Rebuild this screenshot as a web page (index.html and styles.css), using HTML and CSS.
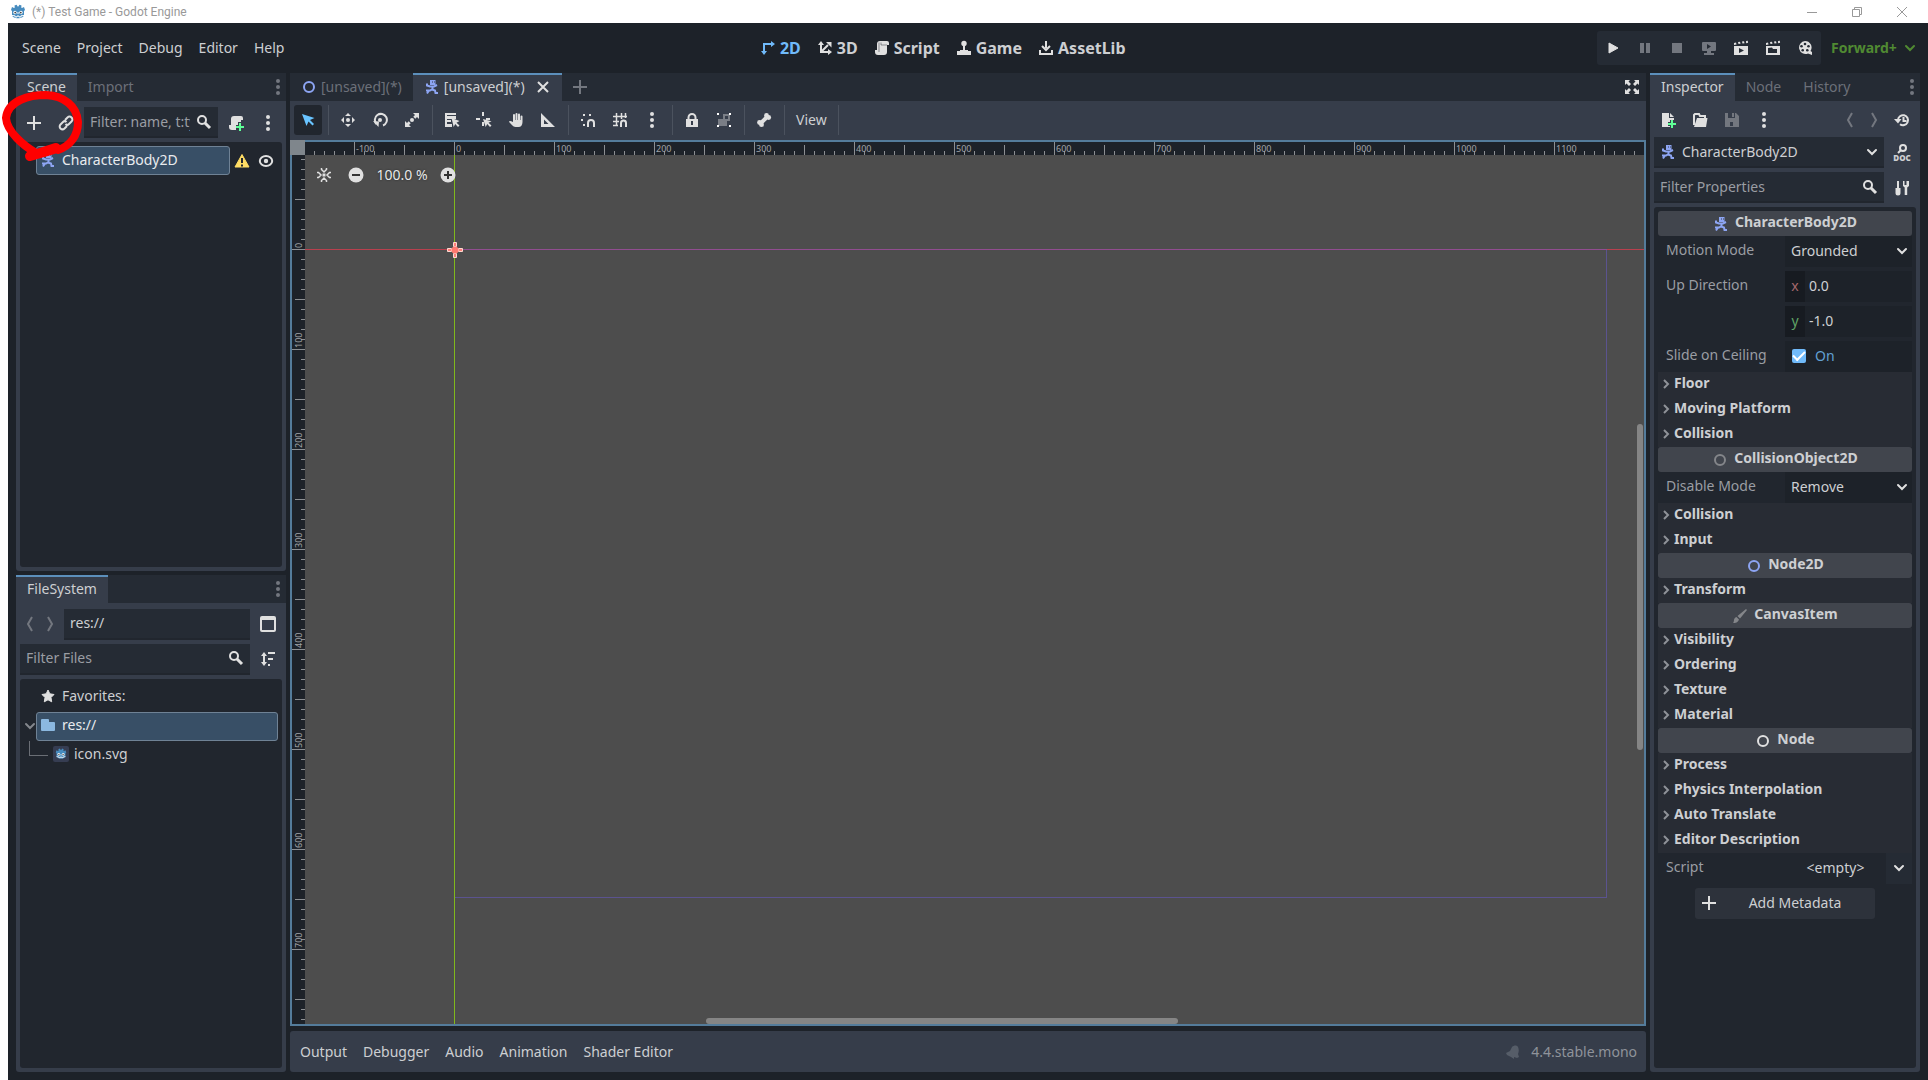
FILE: index.html
```html
<!DOCTYPE html>
<html lang="en">
<head>
    <meta charset="UTF-8">
    <meta name="viewport" content="width=device-width, initial-scale=1.0">
    <title>(*) Test Game - Godot Engine</title>
    <link rel="stylesheet" href="styles.css">
</head>
<body>
    <svg class="sprite" aria-hidden="true">
        <symbol id="i-godot" viewBox="0 0 16 16"><path fill="#478cbf" d="M1 6l1-3 2 1 .8-.5L4.500 1.600 6.600 .8l1 1.700h.8l1-1.700 2.100.8-.3 1.900.8.5 2-1 1 3-1 1v4c0 2-3 3.200-6 3.200S2 13 2 11V7z"/><circle cx="5" cy="8.500" r="1.700" fill="#fff"/><circle cx="11" cy="8.500" r="1.700" fill="#fff"/><circle cx="5.200" cy="8.600" r=".9" fill="#414042"/><circle cx="10.800" cy="8.600" r=".9" fill="#414042"/><path stroke="#fff" d="M8 8v2M2 11.500l3 .3v1l2 .2v-1h2v1l2-.2v-1l3-.3" fill="none"/></symbol>
        <symbol id="i-body" viewBox="0 0 16 16"><path fill="#8da5f3" d="M6 1h5.500v5H6z"/><path d="M3 4.500v2l3 1h4l3-1.500M8.500 7v3L6 11.500H2M8 10.500l3 1 .5 2.500H14M5 11.500L3 14.500" fill="none" stroke="#8da5f3" stroke-width="2"/><path stroke="#363d4a" d="M8 3h1M10 3h1"/></symbol>
        <symbol id="i-ring" viewBox="0 0 16 16"><circle cx="8" cy="8" r="5" fill="none" stroke="currentColor" stroke-width="2"/></symbol>
        <symbol id="i-brush" viewBox="0 0 16 16"><path fill="currentColor" d="M14 1l1 1-7 8.500L5.500 8zM4.500 9l2.500 2.500c-1 3-3.500 3.500-6 3.500 1.500-1 0-5 3.500-6z"/></symbol>
        <symbol id="i-add" viewBox="0 0 16 16"><path fill="currentColor" d="M7 1v6H1v2h6v6h2V9h6V7H9V1z"/></symbol>
        <symbol id="i-link" viewBox="0 0 16 16"><path d="M7 5l2.500-2.500a2.500 2.500 0 0 1 4 4L11 9a2.500 2.500 0 0 1-3.500 0M9 11l-2.500 2.500a2.500 2.500 0 0 1-4-4L5 7a2.500 2.500 0 0 1 3.500 0" fill="none" stroke="currentColor" stroke-width="2"/></symbol>
        <symbol id="i-search" viewBox="0 0 16 16"><circle cx="6" cy="6" r="4" fill="none" stroke="currentColor" stroke-width="2"/><path d="M9 9l5 5" stroke="currentColor" stroke-width="3"/></symbol>
        <symbol id="i-script" viewBox="0 0 16 16"><path fill="currentColor" d="M6 1a3 3 0 0 0-3 3v6H1v2a3 3 0 0 0 3 3h6a3 3 0 0 0 3-3V5h2V3a2 2 0 0 0-2-2z"/><path stroke="#1d2229" stroke-opacity=".45" fill="none" d="M5 2.500V12M7 5h6M7 2.500V5"/></symbol>
        <symbol id="i-script-add" viewBox="0 0 16 16"><path fill="currentColor" d="M6 1a3 3 0 0 0-3 3v6H1v2a3 3 0 0 0 3 3h4v-5h2V7h3V5h2V3a2 2 0 0 0-2-2z"/><path fill="#5fff97" d="M11 8v3H8v2h3v3h2v-3h3v-2h-3V8z"/></symbol>
        <symbol id="i-dots" viewBox="0 0 16 16"><g fill="currentColor"><circle cx="8" cy="2" r="2"/><circle cx="8" cy="8" r="2"/><circle cx="8" cy="14" r="2"/></g></symbol>
        <symbol id="i-warning" viewBox="0 0 16 16"><path fill="#ffdd65" d="M8 1.500L15 14H1z" stroke="#ffdd65" stroke-linejoin="round"/><path stroke="#21262e" stroke-width="2" d="M8 5v5M8 11.500v2"/></symbol>
        <symbol id="i-eye" viewBox="0 0 16 16"><ellipse cx="8" cy="8" rx="6.200" ry="5" fill="none" stroke="currentColor" stroke-width="2"/><circle cx="8" cy="8" r="2.200" fill="currentColor"/></symbol>
        <symbol id="i-back" viewBox="0 0 16 16"><path d="M10 1L6 8l4 7" fill="none" stroke="currentColor" stroke-width="2"/></symbol>
        <symbol id="i-fwd" viewBox="0 0 16 16"><path d="M6 1l4 7-4 7" fill="none" stroke="currentColor" stroke-width="2"/></symbol>
        <symbol id="i-panel" viewBox="0 0 16 16"><path fill="currentColor" fill-rule="evenodd" d="M2 0h12a2 2 0 0 1 2 2v12a2 2 0 0 1-2 2H2a2 2 0 0 1-2-2V2a2 2 0 0 1 2-2zm0 4v10h12V4z"/></symbol>
        <symbol id="i-sort" viewBox="0 0 16 16"><path fill="currentColor" d="M4 1l3 4H5v6h2l-3 4-3-4h2V5H1zM8 1h7v2H8zM8 7h5v2H8zM8 13h2v2H8z"/></symbol>
        <symbol id="i-star" viewBox="0 0 16 16"><path fill="currentColor" stroke="currentColor" stroke-linejoin="round" d="M8 2l1.800 3.800 4.200.7-3 3 .7 4.300L8 11.800l-3.700 2 .7-4.300-3-3 4.200-.7z"/></symbol>
        <symbol id="i-folder" viewBox="0 0 16 16"><path fill="#8bb8e0" d="M2 2a1 1 0 0 0-1 1v10a1 1 0 0 0 1 1h12a1 1 0 0 0 1-1V6a1 1 0 0 0-1-1H9V3a1 1 0 0 0-1-1z"/></symbol>
        <symbol id="i-down" viewBox="0 0 16 16"><path d="M4 6l4 4 4-4" fill="none" stroke="currentColor" stroke-width="2" stroke-linecap="round"/></symbol>
        <symbol id="i-right" viewBox="0 0 16 16"><path d="M6 4l4 4-4 4" fill="none" stroke="currentColor" stroke-width="2"/></symbol>
        <symbol id="i-close" viewBox="0 0 16 16"><path d="M3 3l10 10M13 3L3 13" stroke="currentColor" stroke-width="2"/></symbol>
        <symbol id="i-select" viewBox="0 0 16 16"><path fill="#69c4ff" d="M2 2l4.500 12 2-4.500 4 4 1.500-1.500-4-4L14.500 6z"/></symbol>
        <symbol id="i-move" viewBox="0 0 16 16"><path fill="currentColor" d="M8 1l3 3H5zM8 15l3-3H5zM1 8l3-3v6zM15 8l-3-3v6z"/><circle cx="8" cy="8" r="2" fill="currentColor"/></symbol>
        <symbol id="i-rotate" viewBox="0 0 16 16"><path d="M4.500 12A6 6 0 1 1 11 13.500" fill="none" stroke="currentColor" stroke-width="2"/><path fill="currentColor" d="M1 9l6 .5-.5 5.500z"/><circle cx="8" cy="8" r="2" fill="currentColor"/></symbol>
        <symbol id="i-scale" viewBox="0 0 16 16"><path fill="currentColor" d="M9 1h6v6l-2-2-1.700 1.700-2-2L11 3zM7 15H1V9l2 2 1.700-1.700 2 2L5 13z"/><circle cx="8" cy="8" r="2" fill="currentColor"/></symbol>
        <symbol id="i-list" viewBox="0 0 16 16"><path fill="currentColor" d="M1 1h11v2H3v1h9v3H3v1h4v2H3v2h5v3H1z"/><path fill="currentColor" d="M7.500 6l2.200 9 1.500-3 2.800 3 1.500-1.500-3-2.800L15.500 9z"/></symbol>
        <symbol id="i-pivot" viewBox="0 0 16 16"><path fill="currentColor" d="M6 0h2v4H6zM0 6h4v2H0zM6 10h2v4H6zM10 6h4v2h-4z"/><path fill="currentColor" d="M7 7l2.700 8 1.500-3 2.800 3 1.500-1.500-3-2.800 3-1.500z"/></symbol>
        <symbol id="i-hand" viewBox="0 0 16 16"><path fill="currentColor" d="M5 3a1 1 0 0 1 2 0v5h.5V2a1 1 0 0 1 2 0v6h.5V2.500a1 1 0 0 1 2 0V8h.5V4.500a1 1 0 0 1 2 0V10c0 3-1.500 5-4 5H7.500C5 15 3.500 12 1 10c0-1.500 1.500-1.500 4 0z"/></symbol>
        <symbol id="i-ruler" viewBox="0 0 16 16"><path fill="currentColor" fill-rule="evenodd" d="M1 1l14 14H1zm3 6.500V12h4.500z"/></symbol>
        <symbol id="i-snap" viewBox="0 0 16 16"><path fill="currentColor" d="M3 2h2v2H3zM9 2h2v2H9zM1 7h2v2H1zM3 12h2v2H3z"/><path d="M8 15v-4a3 3 0 0 1 6 0v4" fill="none" stroke="currentColor" stroke-width="2"/></symbol>
        <symbol id="i-grid" viewBox="0 0 16 16"><path d="M4.500 1v13M9.500 1v6M1 4.500h14M1 9.500h6M1 13.500h5M13.500 1v5" stroke="currentColor" stroke-width="1.500"/><path d="M9 15v-4a2.500 2.500 0 0 1 5 0v4" fill="none" stroke="currentColor" stroke-width="2"/></symbol>
        <symbol id="i-lock" viewBox="0 0 16 16"><path d="M4.500 8V5.500a3.500 3.500 0 0 1 7 0V8" fill="none" stroke="currentColor" stroke-width="2"/><path fill="currentColor" fill-rule="evenodd" d="M2 7h12v8H2zm5 2v4h2V9z"/></symbol>
        <symbol id="i-group" viewBox="0 0 16 16"><path fill="currentColor" fill-opacity=".4" fill-rule="evenodd" d="M7 2h7v7h-3v5H2V7h5zm2 2v3h3V4z"/><path fill="#fff" d="M1 1h2v2H1zM13 1h2v2h-2zM1 13h2v2H1zM13 13h2v2h-2z"/></symbol>
        <symbol id="i-bone" viewBox="0 0 16 16"><path d="M4.500 11.500l7-7" stroke="currentColor" stroke-width="4"/><g fill="currentColor"><circle cx="3.500" cy="10.500" r="2.400"/><circle cx="5.500" cy="12.700" r="2.400"/><circle cx="10.500" cy="3.500" r="2.400"/><circle cx="12.700" cy="5.500" r="2.400"/></g></symbol>
        <symbol id="i-2d" viewBox="0 0 16 16"><path d="M4 12V4h7" fill="none" stroke="currentColor" stroke-width="2"/><path fill="currentColor" d="M11 1l4 3-4 3zM1 11h6l-3 4z"/></symbol>
        <symbol id="i-3d" viewBox="0 0 16 16"><path d="M4 4v8h7M4 12l7-7" fill="none" stroke="currentColor" stroke-width="2"/><path fill="currentColor" d="M1 5h6L4 1zM11 9l4 3-4 3zM9 2h5.500v5.500z"/></symbol>
        <symbol id="i-game" viewBox="0 0 16 16"><circle cx="8" cy="3.500" r="2.700" fill="currentColor"/><path fill="currentColor" d="M7 5h2v5h3v1h3v4H1v-4h3v-1h3z"/></symbol>
        <symbol id="i-asset" viewBox="0 0 16 16"><path d="M2 10v4h12v-4M8 1v7" fill="none" stroke="currentColor" stroke-width="2"/><path d="M4 6l4 4 4-4" fill="none" stroke="currentColor" stroke-width="2"/></symbol>
        <symbol id="i-play" viewBox="0 0 16 16"><path fill="currentColor" d="M4 3v10l9-5z" stroke="currentColor" stroke-linejoin="round"/></symbol>
        <symbol id="i-pause" viewBox="0 0 16 16"><path fill="currentColor" d="M3 3h4v10H3zM9 3h4v10H9z"/></symbol>
        <symbol id="i-stop" viewBox="0 0 16 16"><path fill="currentColor" d="M3 3h10v10H3z"/></symbol>
        <symbol id="i-remote" viewBox="0 0 16 16"><path fill="currentColor" fill-rule="evenodd" d="M2 2h12a1 1 0 0 1 1 1v7a1 1 0 0 1-1 1h-4v2h3v2H3v-2h3v-2H2a1 1 0 0 1-1-1V3a1 1 0 0 1 1-1zm4 2v5l4-2.500z"/></symbol>
        <symbol id="i-clip" viewBox="0 0 16 16"><path fill="currentColor" fill-rule="evenodd" d="M1 6h14v9H1zm5 2v5l5-2.500z"/><path fill="currentColor" d="M1 3l2-.5.5 2L1 5zM5 2l2-.3.500 2-2 .4zM9 1.500l2-.3.500 2-2 .4zM13 1l1.800-.2.300 2-2 .4z"/></symbol>
        <symbol id="i-clip-folder" viewBox="0 0 16 16"><path fill="currentColor" fill-rule="evenodd" d="M1 6h14v9H1zm2 2v5h9V9H8L7 7.500z"/><path fill="currentColor" d="M1 3l2-.5.5 2L1 5zM5 2l2-.3.500 2-2 .4zM9 1.500l2-.3.500 2-2 .4zM13 1l1.800-.2.300 2-2 .4z"/></symbol>
        <symbol id="i-reel" viewBox="0 0 16 16"><path fill="currentColor" d="M8 1a6.500 6.500 0 1 0 3 12.500L15 15v-3l-1.500-1A6.500 6.500 0 0 0 8 1z"/><g fill="#252b34"><circle cx="8" cy="4" r="1.300"/><circle cx="4.500" cy="6.300" r="1.300"/><circle cx="11.500" cy="6.300" r="1.300"/><circle cx="5.700" cy="10.300" r="1.300"/><circle cx="10.300" cy="10.300" r="1.300"/></g></symbol>
        <symbol id="i-expand" viewBox="0 0 16 16"><path fill="currentColor" d="M1 1h5L4.500 2.500l2.500 2.500-2 2-2.500-2.500L1 6zM15 1v5l-1.500-1.500L11 7 9 5l2.500-2.500L10 1zM1 15v-5l1.500 1.500L5 9l2 2-2.500 2.500L6 15zM15 15h-5l1.500-1.500L9 11l2-2 2.500 2.500L15 10z"/></symbol>
        <symbol id="i-new" viewBox="0 0 16 16"><path fill="currentColor" d="M2 1h7v5h5v2h-4v2H8v4h2v1H2zM10 1l4 4h-4z"/><path fill="#5fff97" d="M11 8v3H8v2h3v3h2v-3h3v-2h-3V8z"/></symbol>
        <symbol id="i-open" viewBox="0 0 16 16"><path d="M2 13V3l1-1h4l1 2h5v3" fill="none" stroke="currentColor" stroke-width="2"/><path fill="currentColor" d="M5 6h10.500l-1.500 9H2z"/></symbol>
        <symbol id="i-save" viewBox="0 0 16 16"><path fill="currentColor" fill-rule="evenodd" d="M1 1h3v5h7V1h1l3 3v11H1zm5 9v4h3v-4zM8 1h2v4H8z"/></symbol>
        <symbol id="i-history" viewBox="0 0 16 16"><path d="M4 8a5 5 0 1 1 2 4.200M9.500 5v4h3" fill="none" stroke="currentColor" stroke-width="2"/><path fill="currentColor" d="M0 7h7.500L4 11.500z"/></symbol>
        <symbol id="i-tools" viewBox="0 0 16 16"><path fill="currentColor" d="M3 1h2v7h1.500v5a2.500 2.500 0 0 1-5 0V8H3zM9 1h1.500v4h2V1H15v5l-1.800 1.500V15h-2.500V7.500L9 6z"/></symbol>
        <symbol id="i-doc" viewBox="0 0 16 10"><circle cx="9" cy="4" r="3" fill="none" stroke="currentColor" stroke-width="2"/><path d="M7 6L4 9" stroke="currentColor" stroke-width="2"/></symbol>
        <symbol id="i-center" viewBox="0 0 16 16"><path d="M5.500 1v1.500L8 5l2.500-2.500V1M5.500 15v-1.500L8 11l2.500 2.500V15M1 5.500h1.500L5 8l-2.500 2.500H1M15 5.500h-1.500L11 8l2.500 2.500H15" fill="none" stroke="currentColor" stroke-width="1.500"/><path fill="currentColor" d="M6.500 6.500h3v3h-3z"/></symbol>
        <symbol id="i-minus-c" viewBox="0 0 16 16"><circle cx="8" cy="8" r="7.500" fill="#e0e0e0"/><path stroke="#333" stroke-width="2" d="M4 8h8"/></symbol>
        <symbol id="i-plus-c" viewBox="0 0 16 16"><circle cx="8" cy="8" r="7.500" fill="#e0e0e0"/><path stroke="#333" stroke-width="2" d="M4 8h8M8 4v8"/></symbol>
        <symbol id="i-bell" viewBox="0 0 16 16"><path fill="currentColor" d="M7 3c2-2 5-2 6 0s1 5 0 7l1 3-2 1-3-1v2l-3-2-4-2-1-2 4-2z"/></symbol>
        <symbol id="i-min" viewBox="0 0 12 12"><path d="M1 6.500h10" stroke="currentColor"/></symbol>
        <symbol id="i-restore" viewBox="0 0 12 12"><path d="M1.500 3.500h7v7h-7zM3.500 3.500v-2h7v7h-2" fill="none" stroke="currentColor"/></symbol>
        <symbol id="i-x" viewBox="0 0 12 12"><path d="M1 1l10 10M11 1L1 11" stroke="currentColor"/></symbol>
    </svg>

    <header class="titlebar">
        <svg class="icon"><use href="#i-godot"/></svg>
        <span class="title">(*) Test Game - Godot Engine</span>
        <div class="window-buttons">
            <button aria-label="Minimize"><svg><use href="#i-min"/></svg></button>
            <button aria-label="Restore"><svg><use href="#i-restore"/></svg></button>
            <button aria-label="Close"><svg><use href="#i-x"/></svg></button>
        </div>
    </header>

    <div class="editor">
        <div class="menubar">
            <nav class="menus">
                <button>Scene</button>
                <button>Project</button>
                <button>Debug</button>
                <button>Editor</button>
                <button>Help</button>
            </nav>
            <nav class="screens">
                <button class="active"><svg class="icon"><use href="#i-2d"/></svg>2D</button>
                <button><svg class="icon"><use href="#i-3d"/></svg>3D</button>
                <button><svg class="icon"><use href="#i-script"/></svg>Script</button>
                <button><svg class="icon"><use href="#i-game"/></svg>Game</button>
                <button><svg class="icon"><use href="#i-asset"/></svg>AssetLib</button>
            </nav>
            <div class="run">
                <div class="runbar">
                    <button aria-label="Play"><svg class="icon"><use href="#i-play"/></svg></button>
                    <button class="off" aria-label="Pause"><svg class="icon"><use href="#i-pause"/></svg></button>
                    <button class="off" aria-label="Stop"><svg class="icon"><use href="#i-stop"/></svg></button>
                    <button class="off" aria-label="Remote Debug"><svg class="icon"><use href="#i-remote"/></svg></button>
                    <button aria-label="Play Scene"><svg class="icon"><use href="#i-clip"/></svg></button>
                    <button aria-label="Play Custom Scene"><svg class="icon"><use href="#i-clip-folder"/></svg></button>
                    <button aria-label="Movie Maker"><svg class="icon"><use href="#i-reel"/></svg></button>
                </div>
                <div class="dropdown renderer">
                    <select aria-label="Renderer"><option>Forward+</option></select>
                    <svg class="icon"><use href="#i-down"/></svg>
                </div>
            </div>
        </div>

        <div class="workspace">
            <aside class="side">
                <section class="dock scene-dock">
                    <div class="tabs">
                        <button class="tab active">Scene</button>
                        <button class="tab">Import</button>
                        <button class="tab-menu" aria-label="Dock menu"><svg class="icon"><use href="#i-dots"/></svg></button>
                    </div>
                    <div class="dock-body">
                        <div class="row">
                            <button class="tool" aria-label="Add node"><svg class="icon"><use href="#i-add"/></svg></button>
                            <button class="tool" aria-label="Instantiate scene"><svg class="icon"><use href="#i-link"/></svg></button>
                            <div class="field">
                                <input type="text" placeholder="Filter: name, t:type, g:group" aria-label="Filter nodes">
                                <svg class="icon"><use href="#i-search"/></svg>
                            </div>
                            <button class="tool" aria-label="Attach script"><svg class="icon"><use href="#i-script-add"/></svg></button>
                            <button class="tool" aria-label="More"><svg class="icon"><use href="#i-dots"/></svg></button>
                        </div>
                        <ul class="tree">
                            <li>
                                <span class="item selected"><svg class="icon"><use href="#i-body"/></svg>CharacterBody2D</span>
                                <svg class="icon warning"><use href="#i-warning"/></svg>
                                <svg class="icon eye"><use href="#i-eye"/></svg>
                            </li>
                        </ul>
                    </div>
                </section>

                <section class="dock file-dock">
                    <div class="tabs">
                        <button class="tab active">FileSystem</button>
                        <button class="tab-menu" aria-label="Dock menu"><svg class="icon"><use href="#i-dots"/></svg></button>
                    </div>
                    <div class="dock-body">
                        <div class="row">
                            <div class="history">
                                <button class="off" aria-label="Back"><svg class="icon"><use href="#i-back"/></svg></button>
                                <button class="off" aria-label="Forward"><svg class="icon"><use href="#i-fwd"/></svg></button>
                            </div>
                            <div class="field"><input type="text" value="res://" aria-label="Path"></div>
                            <button class="tool" aria-label="Split mode"><svg class="icon"><use href="#i-panel"/></svg></button>
                        </div>
                        <div class="row">
                            <div class="field">
                                <input type="text" placeholder="Filter Files" aria-label="Filter files">
                                <svg class="icon"><use href="#i-search"/></svg>
                            </div>
                            <button class="tool" aria-label="Sort"><svg class="icon"><use href="#i-sort"/></svg></button>
                        </div>
                        <ul class="tree">
                            <li><span class="item"><svg class="icon"><use href="#i-star"/></svg>Favorites:</span></li>
                            <li class="open">
                                <svg class="icon arrow"><use href="#i-down"/></svg>
                                <span class="item selected"><svg class="icon"><use href="#i-folder"/></svg>res://</span>
                            </li>
                            <li class="child"><span class="item"><svg class="icon thumb"><use href="#i-godot"/></svg>icon.svg</span></li>
                        </ul>
                    </div>
                </section>
            </aside>

            <main class="main">
                <div class="tabs">
                    <button class="tab scene-tab"><svg class="icon node2d"><use href="#i-ring"/></svg>[unsaved](*)</button>
                    <button class="tab scene-tab active"><svg class="icon"><use href="#i-body"/></svg>[unsaved](*)<svg class="icon close"><use href="#i-close"/></svg></button>
                    <button class="add-tab" aria-label="New scene"><svg class="icon"><use href="#i-add"/></svg></button>
                    <button class="tab-menu expand" aria-label="Distraction free mode"><svg class="icon"><use href="#i-expand"/></svg></button>
                </div>
                <div class="toolbar">
                    <button class="tool pressed" aria-label="Select"><svg class="icon"><use href="#i-select"/></svg></button>
                    <span class="sep"></span>
                    <button class="tool" aria-label="Move"><svg class="icon"><use href="#i-move"/></svg></button>
                    <button class="tool" aria-label="Rotate"><svg class="icon"><use href="#i-rotate"/></svg></button>
                    <button class="tool" aria-label="Scale"><svg class="icon"><use href="#i-scale"/></svg></button>
                    <span class="sep"></span>
                    <button class="tool" aria-label="List select"><svg class="icon"><use href="#i-list"/></svg></button>
                    <button class="tool" aria-label="Pivot"><svg class="icon"><use href="#i-pivot"/></svg></button>
                    <button class="tool" aria-label="Pan"><svg class="icon"><use href="#i-hand"/></svg></button>
                    <button class="tool" aria-label="Ruler"><svg class="icon"><use href="#i-ruler"/></svg></button>
                    <span class="sep"></span>
                    <button class="tool" aria-label="Smart snap"><svg class="icon"><use href="#i-snap"/></svg></button>
                    <button class="tool" aria-label="Grid snap"><svg class="icon"><use href="#i-grid"/></svg></button>
                    <button class="tool" aria-label="Snap options"><svg class="icon"><use href="#i-dots"/></svg></button>
                    <span class="sep"></span>
                    <button class="tool" aria-label="Lock"><svg class="icon"><use href="#i-lock"/></svg></button>
                    <button class="tool" aria-label="Group"><svg class="icon"><use href="#i-group"/></svg></button>
                    <span class="sep"></span>
                    <button class="tool" aria-label="Skeleton"><svg class="icon"><use href="#i-bone"/></svg></button>
                    <span class="sep"></span>
                    <button class="view">View</button>
                    <span class="sep"></span>
                </div>

                <div class="viewport">
                    <div class="corner"></div>
                    <div class="ruler-x">
                        <span>-100</span><span>0</span><span>100</span><span>200</span><span>300</span><span>400</span><span>500</span><span>600</span><span>700</span><span>800</span><span>900</span><span>1000</span><span>1100</span>
                    </div>
                    <div class="ruler-y">
                        <span>0</span><span>100</span><span>200</span><span>300</span><span>400</span><span>500</span><span>600</span><span>700</span>
                    </div>
                    <div class="canvas">
                        <div class="axis-x"></div>
                        <div class="game-rect"></div>
                        <div class="axis-y"></div>
                        <svg class="origin" viewBox="0 0 16 16"><path fill="#ff8078" stroke="#ffd8d0" d="M6.500.500h3v4h-3zM6.500 11.500h3v4h-3zM.500 6.500h4v3h-4zM11.500 6.500h4v3h-4z"/><circle cx="8" cy="8" r="3.500" fill="#ff7a70"/></svg>
                        <div class="zoom">
                            <button aria-label="Center view"><svg class="icon"><use href="#i-center"/></svg></button>
                            <button aria-label="Zoom out"><svg class="icon"><use href="#i-minus-c"/></svg></button>
                            <span>100.0 %</span>
                            <button aria-label="Zoom in"><svg class="icon"><use href="#i-plus-c"/></svg></button>
                        </div>
                        <div class="scroll-y"></div>
                        <div class="scroll-x"></div>
                    </div>
                </div>

                <footer class="bottom">
                    <button>Output</button>
                    <button>Debugger</button>
                    <button>Audio</button>
                    <button>Animation</button>
                    <button>Shader Editor</button>
                    <span class="version"><svg class="icon"><use href="#i-bell"/></svg>4.4.stable.mono</span>
                </footer>
            </main>

            <aside class="side">
                <section class="dock inspector">
                    <div class="tabs">
                        <button class="tab active">Inspector</button>
                        <button class="tab">Node</button>
                        <button class="tab">History</button>
                        <button class="tab-menu" aria-label="Dock menu"><svg class="icon"><use href="#i-dots"/></svg></button>
                    </div>
                    <div class="dock-body">
                        <div class="row resource-row">
                            <button class="tool" aria-label="New resource"><svg class="icon"><use href="#i-new"/></svg></button>
                            <button class="tool" aria-label="Load resource"><svg class="icon"><use href="#i-open"/></svg></button>
                            <button class="tool off" aria-label="Save resource"><svg class="icon"><use href="#i-save"/></svg></button>
                            <button class="tool" aria-label="More"><svg class="icon"><use href="#i-dots"/></svg></button>
                            <button class="nav off" aria-label="Previous object"><svg class="icon"><use href="#i-back"/></svg></button>
                            <button class="nav off" aria-label="Next object"><svg class="icon"><use href="#i-fwd"/></svg></button>
                            <button class="tool" aria-label="Object history"><svg class="icon"><use href="#i-history"/></svg></button>
                        </div>
                        <div class="row">
                            <div class="field object">
                                <svg class="icon"><use href="#i-body"/></svg>
                                <select aria-label="Edited object"><option>CharacterBody2D</option></select>
                                <svg class="icon"><use href="#i-down"/></svg>
                            </div>
                            <button class="tool doc" aria-label="Open documentation"><svg class="icon"><use href="#i-doc"/></svg>DOC</button>
                        </div>
                        <div class="row">
                            <div class="field">
                                <input type="text" placeholder="Filter Properties" aria-label="Filter properties">
                                <svg class="icon"><use href="#i-search"/></svg>
                            </div>
                            <button class="tool" aria-label="Property tools"><svg class="icon"><use href="#i-tools"/></svg></button>
                        </div>

                        <div class="props">
                            <h2><svg class="icon"><use href="#i-body"/></svg>CharacterBody2D</h2>
                            <div class="fields">
                                <div class="prop">
                                    <label for="motion">Motion Mode</label>
                                    <div class="value dropdown"><select id="motion"><option>Grounded</option></select><svg class="icon"><use href="#i-down"/></svg></div>
                                </div>
                                <div class="prop">
                                    <label for="upx">Up Direction</label>
                                    <div class="vector">
                                        <div class="value"><label class="axis x" for="upx">x</label><input id="upx" type="text" value="0.0"></div>
                                        <div class="value"><label class="axis y" for="upy">y</label><input id="upy" type="text" value="-1.0"></div>
                                    </div>
                                </div>
                                <div class="prop">
                                    <label for="slide">Slide on Ceiling</label>
                                    <div class="value check"><input id="slide" type="checkbox" checked><label for="slide">On</label></div>
                                </div>
                            </div>
                            <button class="group"><svg class="icon"><use href="#i-right"/></svg>Floor</button>
                            <button class="group"><svg class="icon"><use href="#i-right"/></svg>Moving Platform</button>
                            <button class="group"><svg class="icon"><use href="#i-right"/></svg>Collision</button>
                            <h2><svg class="icon object2d"><use href="#i-ring"/></svg>CollisionObject2D</h2>
                            <div class="fields">
                                <div class="prop">
                                    <label for="disable">Disable Mode</label>
                                    <div class="value dropdown"><select id="disable"><option>Remove</option></select><svg class="icon"><use href="#i-down"/></svg></div>
                                </div>
                            </div>
                            <button class="group"><svg class="icon"><use href="#i-right"/></svg>Collision</button>
                            <button class="group"><svg class="icon"><use href="#i-right"/></svg>Input</button>
                            <h2><svg class="icon node2d"><use href="#i-ring"/></svg>Node2D</h2>
                            <button class="group"><svg class="icon"><use href="#i-right"/></svg>Transform</button>
                            <h2><svg class="icon canvas-item"><use href="#i-brush"/></svg>CanvasItem</h2>
                            <button class="group"><svg class="icon"><use href="#i-right"/></svg>Visibility</button>
                            <button class="group"><svg class="icon"><use href="#i-right"/></svg>Ordering</button>
                            <button class="group"><svg class="icon"><use href="#i-right"/></svg>Texture</button>
                            <button class="group"><svg class="icon"><use href="#i-right"/></svg>Material</button>
                            <h2><svg class="icon"><use href="#i-ring"/></svg>Node</h2>
                            <button class="group"><svg class="icon"><use href="#i-right"/></svg>Process</button>
                            <button class="group"><svg class="icon"><use href="#i-right"/></svg>Physics Interpolation</button>
                            <button class="group"><svg class="icon"><use href="#i-right"/></svg>Auto Translate</button>
                            <button class="group"><svg class="icon"><use href="#i-right"/></svg>Editor Description</button>
                            <div class="prop">
                                <label for="script">Script</label>
                                <div class="script-value">
                                    <button id="script">&lt;empty&gt;</button>
                                    <button class="pick" aria-label="Script options"><svg class="icon"><use href="#i-down"/></svg></button>
                                </div>
                            </div>
                            <button class="metadata"><svg class="icon"><use href="#i-add"/></svg><span>Add Metadata</span></button>
                        </div>
                    </div>
                </section>
            </aside>
        </div>
    </div>

    <!-- hand-drawn circle over the add button -->
    <svg class="marker" viewBox="0 0 90 80" aria-hidden="true">
        <path d="M36 65C24 58 7 44 6 30C8 12 30 7 46 7C64 8 77 18 78 34C78 48 70 58 58 62" stroke-width="8"/>
        <path d="M30 68C40 65 48 63 56 60" stroke-width="10"/>
    </svg>
</body>
</html>
```

FILE: styles.css
```css
* {
    box-sizing: border-box;
}
body {
    margin: 0;
    height: 100vh;
    display: flex;
    flex-direction: column;
    background: #fff;
    color: #cdcfd2;
    font: 14px/20px "Noto Sans", "Open Sans", sans-serif;
}
button,
input,
select {
    font: inherit;
    color: inherit;
    background: none;
    border: 0;
    margin: 0;
    padding: 0;
    min-width: 0;
}
select {
    appearance: none;
}
input::placeholder {
    color: #9a9da3;
    opacity: 1;
}
ul {
    list-style: none;
    margin: 0;
    padding: 0;
}
.sprite {
    position: absolute;
    width: 0;
    height: 0;
}
.icon {
    display: block;
    flex: none;
    width: 16px;
    height: 16px;
    color: #e0e0e0;
}
.off .icon {
    color: #73777f;
}
.node2d {
    color: #8da5f3;
}
.object2d,
.canvas-item {
    color: #84868a;
}

/* window title */
.titlebar {
    display: flex;
    align-items: center;
    flex: none;
    height: 23px;
    padding: 0 4px 0 10px;
    gap: 6px;
    color: #999;
    font-family: Roboto, "Open Sans", sans-serif;
    font-size: 12px;
}
.window-buttons {
    display: flex;
    margin-left: auto;
}
.window-buttons button {
    width: 45px;
    height: 20px;
    display: grid;
    place-items: center;
}
.window-buttons svg {
    width: 12px;
    height: 12px;
}

.editor {
    flex: 1;
    min-height: 0;
    display: flex;
    flex-direction: column;
    margin-left: 8px;
    padding: 0 8px 8px;
    background: #1d2229;
}
.menubar {
    display: flex;
    justify-content: space-between;
    align-items: center;
    flex: none;
    height: 50px;
}
.menus,
.screens,
.run,
.runbar {
    display: flex;
    align-items: center;
}
.menus button {
    padding: 0 8px;
}
.menus {
    margin-left: -2px;
}
.screens {
    margin-left: -4px;
}
.screens button {
    display: flex;
    align-items: center;
    gap: 4px;
    padding: 0 8px;
    font-size: 16px;
    font-weight: bold;
}
.screens .active,
.screens .active .icon {
    color: #70bafa;
}
.runbar {
    height: 34px;
    background: #252b34;
    border-radius: 3px;
}
.runbar button {
    width: 32px;
    display: grid;
    place-items: center;
}
.dropdown {
    display: flex;
    align-items: center;
}
.dropdown select {
    flex: 1;
}
.dropdown .icon {
    pointer-events: none;
}
.renderer {
    padding: 0 2px 0 10px;
    gap: 5px;
    color: #508a32;
    font-weight: bold;
}
.renderer .icon {
    color: #508a32;
}

/* docks */
.workspace {
    flex: 1;
    min-height: 0;
    display: flex;
    gap: 4px;
}
.side {
    flex: none;
    width: 270px;
    display: flex;
    flex-direction: column;
    gap: 4px;
}
.dock {
    flex: 1;
    display: flex;
    flex-direction: column;
    min-height: 0;
    border-radius: 0 0 3px 3px;
    background: #363d4a;
}
.tabs {
    display: flex;
    flex: none;
    height: 28px;
    background: #252b34;
}
.tab {
    display: flex;
    align-items: center;
    padding: 0 11px 2px;
    border-top: 2px solid transparent;
    color: #6c7079;
}
.tab.active {
    background: #363d4a;
    border-color: #5c8fbb;
    color: #cdcfd2;
}
.scene-tab {
    gap: 4px;
}
.close {
    margin-left: 6px;
}
.add-tab {
    width: 36px;
    display: grid;
    place-items: center;
}
.add-tab .icon,
.tab-menu .icon {
    color: #73777f;
}
.tab-menu {
    width: 16px;
    margin-left: auto;
}
.expand {
    width: 22px;
}
.expand .icon {
    color: #e0e0e0;
}
.dock-body {
    flex: 1;
    min-height: 0;
    display: flex;
    flex-direction: column;
    gap: 4px;
    padding: 6px 4px 4px;
}
.row {
    display: flex;
    gap: 4px;
    height: 31px;
    flex: none;
}
.tool {
    flex: none;
    width: 28px;
    display: grid;
    place-items: center;
}
.field {
    flex: 1;
    min-width: 0;
    display: flex;
    align-items: center;
    gap: 6px;
    padding: 0 6px;
    background: #252b34;
    border-bottom: 2px solid #21262e;
}
.field input,
.field select {
    flex: 1;
}
.history {
    display: flex;
    width: 40px;
}
.history button {
    width: 20px;
    display: grid;
    place-items: center;
}
.tree {
    flex: 1;
    padding: 4px 4px 4px 16px;
    background: #21262e;
    border-radius: 3px;
}
.tree li {
    display: flex;
    align-items: center;
    height: 29px;
}
.item {
    flex: 1;
    display: flex;
    align-items: center;
    gap: 6px;
    height: 29px;
    padding: 0 3px 2px;
    border: 1px solid transparent;
    border-radius: 3px;
}
.item.selected {
    background: #384f66;
    border-color: #6f8295;
    color: #e8ebee;
}
.warning {
    margin-left: 4px;
}
.eye {
    margin: 0 4px 0 8px;
}
.open .arrow {
    margin-left: -14px;
    margin-right: -2px;
    color: #84878d;
}
.child {
    margin-left: 12px;
}
.child::before {
    content: "";
    align-self: flex-start;
    width: 18px;
    height: 14px;
    margin-left: -19px;
    border: 1px solid #6a6e75;
    border-width: 0 0 1px 1px;
}
.child .item {
    padding-left: 4px;
    gap: 5px;
}
.thumb {
    padding: 2px;
    background: #363d52;
    border-radius: 2px;
}

/* centre */
.main {
    flex: 1;
    min-width: 0;
    display: flex;
    flex-direction: column;
}
.toolbar {
    display: flex;
    gap: 4px;
    flex: none;
    height: 39px;
    padding: 4px 4px 5px;
    background: #363d4a;
}
.toolbar .pressed {
    background: #21262e;
    border-radius: 3px;
}
.sep {
    width: 4px;
    background: linear-gradient(#4b525e, #4b525e) center / 1px 100% no-repeat;
}
.view {
    padding: 0 6px;
}
.viewport {
    flex: 1;
    min-height: 0;
    display: grid;
    grid-template: 13px 1fr / 13px 1fr;
    border: 2px solid #547c9b;
    background: #1d2229;
}
.corner {
    margin: -2px 0 0 -2px;
    background: #7f868c;
}
/* ticks: every 10, 50 and 100 units */
.ruler-x {
    display: flex;
    overflow: hidden;
    padding-left: 49px;
    background:
        linear-gradient(90deg, #8c8f93 1px, transparent 1px) 49px 0 / 100px 100% repeat-x,
        linear-gradient(90deg, #8c8f93 1px, transparent 1px) 99px 100% / 100px 10px repeat-x,
        linear-gradient(90deg, #8c8f93 1px, transparent 1px) 9px 100% / 10px 4px repeat-x;
}
.ruler-x span,
.ruler-y span {
    flex: none;
    font-size: 9px;
    line-height: 13px;
    color: #a0a3a7;
}
.ruler-x span {
    width: 100px;
    padding-left: 2px;
}
.ruler-y {
    display: flex;
    flex-direction: column;
    overflow: hidden;
    background:
        linear-gradient(#8c8f93 1px, transparent 1px) 0 94px / 100% 100px repeat-y,
        linear-gradient(#8c8f93 1px, transparent 1px) 100% 44px / 10px 100px repeat-y,
        linear-gradient(#8c8f93 1px, transparent 1px) 100% 4px / 4px 10px repeat-y;
}
.ruler-y span {
    height: 100px;
    padding-top: 1px;
    writing-mode: vertical-rl;
    transform: rotate(180deg);
}
.ruler-y span:first-child {
    height: 94px;
}
.canvas {
    position: relative;
    overflow: hidden;
    background: #4d4d4d;
}
.axis-x,
.axis-y,
.game-rect,
.origin,
.zoom,
.scroll-x,
.scroll-y {
    position: absolute;
}
.axis-x {
    top: 94px;
    left: 0;
    right: 0;
    height: 1px;
    background: #b8404e;
}
.axis-y {
    left: 149px;
    top: 0;
    bottom: 0;
    width: 1px;
    background: #80b81c;
}
.game-rect {
    left: 149px;
    top: 94px;
    width: 1153px;
    height: 649px;
    border: 1px solid rgba(105, 90, 210, 0.5);
}
.origin {
    left: 142px;
    top: 87px;
    width: 16px;
    height: 16px;
}
.zoom {
    left: 11px;
    top: 10px;
    display: flex;
    align-items: center;
    gap: 16px;
    color: #e8e8e8;
    text-shadow: 0 0 2px #222;
}
.zoom span {
    min-width: 60px;
    margin: 0 -8px;
    text-align: center;
}
.scroll-y {
    right: 1px;
    top: 269px;
    width: 6px;
    height: 326px;
    border-radius: 3px;
    background: #858585;
}
.scroll-x {
    bottom: 0;
    left: 401px;
    width: 472px;
    height: 6px;
    border-radius: 3px;
    background: #858585;
}
.bottom {
    flex: none;
    display: flex;
    align-items: center;
    height: 41px;
    margin-top: 5px;
    padding: 0 9px 0 2px;
    border-radius: 3px;
    background: #363d4a;
}
.bottom button {
    padding: 0 8px;
}
.version {
    display: flex;
    align-items: center;
    gap: 10px;
    margin-left: auto;
    color: #8f939a;
}
.version .icon {
    color: #565d68;
}

/* inspector */
.resource-row {
    height: 26px;
}
.resource-row .tool:nth-child(4) {
    margin-right: auto;
}
.nav {
    width: 20px;
    display: grid;
    place-items: center;
}
.object {
    gap: 6px;
    padding-right: 4px;
}
.doc {
    align-content: center;
    font-size: 8px;
    font-weight: 900;
    line-height: 8px;
}
.doc .icon {
    height: 10px;
}
.props {
    flex: 1;
    display: flex;
    flex-direction: column;
    padding: 4px;
    background: #21262e;
    border-radius: 3px;
}
.props h2 {
    display: flex;
    align-items: center;
    justify-content: center;
    gap: 6px;
    flex: none;
    height: 25px;
    margin: 0;
    padding-bottom: 4px;
    font-size: 14px;
    background: #41454d;
    border-radius: 3px;
}
.props h2 .icon {
    margin-top: 5px;
}
.fields,
.vector {
    display: flex;
    flex-direction: column;
    gap: 4px;
}
.prop {
    display: grid;
    grid-template-columns: minmax(0, 1fr) minmax(0, 1fr);
}
.prop > label {
    padding: 4px 8px;
    white-space: nowrap;
    color: #9a9da3;
}
.value {
    display: flex;
    align-items: center;
    height: 31px;
    background: #1d2229;
}
.value.dropdown {
    padding: 0 2px 1px 6px;
}
.value input {
    flex: 1;
    padding-bottom: 2px;
}
.axis {
    width: 20px;
    margin-right: 4px;
    line-height: 29px;
    padding-bottom: 2px;
    text-align: center;
    background: #171b21;
}
.axis.x {
    color: #a3686c;
}
.axis.y {
    color: #5fa465;
}
.value.check {
    gap: 9px;
    padding: 0 0 1px 7px;
    color: #62a0d2;
}
.check input {
    appearance: none;
    flex: none;
    width: 14px;
    height: 14px;
    padding: 0;
    border-radius: 2px;
    background: #70bafa;
    display: grid;
    place-items: center;
}
.check input::before {
    content: "";
    width: 10px;
    height: 5px;
    margin-top: -3px;
    border: solid #fff;
    border-width: 0 0 2px 2px;
    transform: rotate(-45deg);
}
.group {
    display: flex;
    align-items: center;
    flex: none;
    height: 25px;
    padding: 0 0 4px;
    background: #282c34;
    font-weight: bold;
}
.group .icon {
    color: #8f9298;
    margin-top: 3px;
}
.script-value {
    display: flex;
    height: 31px;
}
.script-value button {
    flex: 1;
    padding-bottom: 2px;
}
.script-value .pick {
    flex: none;
    width: 26px;
    display: grid;
    place-items: center;
    background: #252b34;
}
.metadata {
    display: flex;
    align-items: center;
    align-self: center;
    gap: 4px;
    width: 180px;
    height: 31px;
    margin-top: 4px;
    padding: 0 6px 2px;
    background: #2d323b;
    border-radius: 3px;
}
.metadata span {
    flex: 1;
    text-align: center;
}

.marker {
    position: absolute;
    left: 0;
    top: 88px;
    width: 90px;
    height: 80px;
    fill: none;
    stroke: #f00;
    stroke-linecap: round;
    pointer-events: none;
}
```
